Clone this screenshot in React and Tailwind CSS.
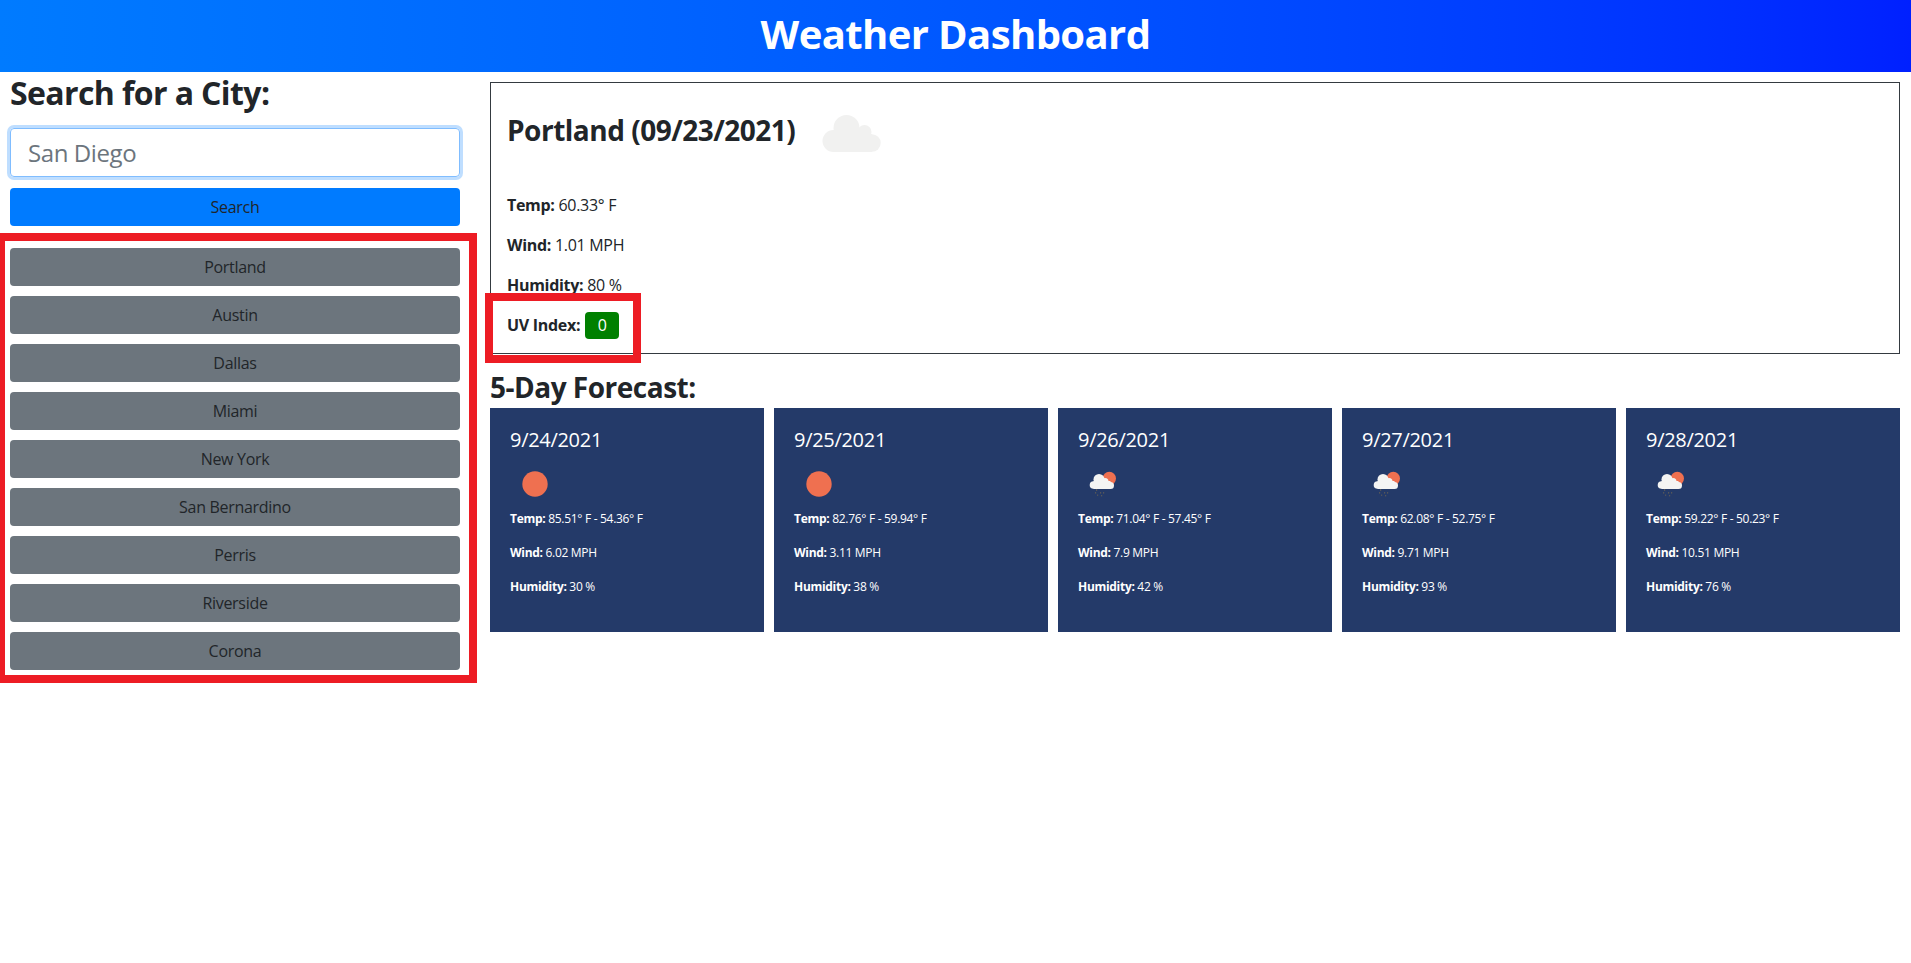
const font = "font-['Open_Sans','Noto_Sans',sans-serif]";

const cities = ["Portland", "Austin", "Dallas", "Miami", "New York", "San Bernardino", "Perris", "Riverside", "Corona"];

const forecast = [
  { date: "9/24/2021", icon: "sun", temp: "85.51° F - 54.36° F", wind: "6.02 MPH", hum: "30 %" },
  { date: "9/25/2021", icon: "sun", temp: "82.76° F - 59.94° F", wind: "3.11 MPH", hum: "38 %" },
  { date: "9/26/2021", icon: "rain", temp: "71.04° F - 57.45° F", wind: "7.9 MPH", hum: "42 %" },
  { date: "9/27/2021", icon: "rain", temp: "62.08° F - 52.75° F", wind: "9.71 MPH", hum: "93 %" },
  { date: "9/28/2021", icon: "rain", temp: "59.22° F - 50.23° F", wind: "10.51 MPH", hum: "76 %" },
];

function Cloud() {
  return (
    <svg width="90" height="70" viewBox="0 0 90 70" className="block shrink-0">
      <g fill="#f1f1f0">
        <circle cx="24.5" cy="41" r="11" />
        <circle cx="63" cy="43" r="8.7" />
        <circle cx="37.5" cy="28" r="13" />
        <circle cx="55.5" cy="32" r="7" />
        <rect x="24" y="34" width="39" height="18" />
      </g>
    </svg>
  );
}

function WeatherIcon({ kind }) {
  if (kind === "sun") {
    return (
      <svg width="50" height="50" viewBox="0 0 50 50" className="block">
        <circle cx="25" cy="25" r="12.7" fill="#ef7050" />
      </svg>
    );
  }
  return (
    <svg width="50" height="50" viewBox="0 0 50 50" className="block">
      <circle cx="31.3" cy="19.5" r="6.7" fill="#ef7050" />
      <g fill="#f4f4f3">
        <circle cx="15.5" cy="26" r="3.8" />
        <circle cx="21" cy="20.5" r="5.5" />
        <circle cx="27" cy="22.5" r="3.5" />
        <circle cx="32.5" cy="26.5" r="3.5" />
        <rect x="15.5" y="22" width="17" height="8" />
      </g>
      <g fill="#55565a">
        <rect x="18" y="30" width="1.2" height="2" />
        <rect x="17" y="33" width="1.2" height="1.6" />
        <rect x="22" y="33" width="1.2" height="1.6" />
        <rect x="25" y="33" width="1.2" height="1.6" />
        <rect x="19" y="35.5" width="1.2" height="1.4" />
        <rect x="23" y="36" width="1.2" height="1.4" />
      </g>
    </svg>
  );
}

function ForecastCard({ d }) {
  return (
    <div className="w-[274px] h-[224px] bg-[#243a69] text-white px-5 pt-5">
      <h5 className="text-[20px] leading-[24px] font-medium m-0 tracking-[-0.3px]">{d.date}</h5>
      <div className="mt-[7px] h-[50px]"><WeatherIcon kind={d.icon} /></div>
      <p className="text-[12px] leading-[18px] mt-[1px] mb-4 tracking-[-0.3px]"><strong>Temp:</strong> {d.temp}</p>
      <p className="text-[12px] leading-[18px] mb-4 tracking-[-0.3px]"><strong>Wind:</strong> {d.wind}</p>
      <p className="text-[12px] leading-[18px] mb-4 tracking-[-0.3px]"><strong>Humidity:</strong> {d.hum}</p>
    </div>
  );
}

export default function App() {
  return (
    <div className={`relative min-h-[963px] bg-white text-[#212529] overflow-hidden ${font}`}>
      <header className="h-[72px] bg-linear-to-r from-[#007bff] to-[#0020ff] flex items-center justify-center">
        <h1 className="text-[40px] leading-[48px] font-bold text-white tracking-[-0.6px] m-0 -mt-[4px]">Weather Dashboard</h1>
      </header>

      <main className="flex pl-[10px] gap-[30px]">
        <aside className="w-[450px] shrink-0 flex flex-col">
          <h2 className="text-[32px] leading-[38px] font-bold mt-[2px] tracking-[-0.6px]">Search for a City:</h2>
          <input
            placeholder="San Diego"
            className="mt-[16px] h-[49px] w-full rounded-[4px] border border-[#80bdff] ring-3 ring-[#007bff]/25 outline-none px-[17px] text-[24px] placeholder:text-[#6c757d] tracking-[-0.4px]"
          />
          <button className="mt-[11px] h-[38px] rounded-[4px] bg-[#007bff] text-[16px] text-[#212529] tracking-[-0.3px]">Search</button>
          <div className="mt-[22px] flex flex-col gap-[10px]">
            {cities.map((c) => (
              <button key={c} className="h-[38px] rounded-[4px] bg-[#6c757d] text-[16px] text-[#212529] tracking-[-0.3px]">{c}</button>
            ))}
          </div>
        </aside>

        <section className="w-[1410px] shrink-0 pt-[10px]">
          <div className="h-[272px] border border-[#343a40] px-4">
            <div className="h-[94px] mb-4 flex items-start">
              <h3 className="w-[303px] shrink-0 text-[28px] leading-[34px] font-bold mt-[30px] tracking-[-0.5px]">Portland (09/23/2021)</h3>
              <div className="mt-[17px] -ml-px"><Cloud /></div>
            </div>
            <p className="text-[16px] leading-[24px] mb-4 tracking-[-0.3px]"><strong>Temp:</strong> 60.33° F</p>
            <p className="text-[16px] leading-[24px] mb-4 tracking-[-0.3px]"><strong>Wind:</strong> 1.01 MPH</p>
            <p className="text-[16px] leading-[24px] mb-4 tracking-[-0.3px]"><strong>Humidity:</strong> 80 %</p>
            <div className="h-6 flex items-center gap-[5px] text-[16px] tracking-[-0.3px]">
              <strong>UV Index:</strong>
              <span className="w-[34px] h-[27px] shrink-0 rounded-[4px] bg-[#008000] text-white flex items-center justify-center">0</span>
            </div>
          </div>

          <h3 className="text-[28px] leading-[34px] font-bold mt-[16px] mb-[4px] tracking-[-0.5px]">5-Day Forecast:</h3>
          <div className="flex gap-[10px]">
            {forecast.map((d) => <ForecastCard key={d.date} d={d} />)}
          </div>
        </section>
      </main>

      {/* Red annotation frames drawn over the page */}
      <div className="absolute left-[-3px] top-[233px] w-[480px] h-[450px] border-[8px] border-[#ed1c24] pointer-events-none" />
      <div className="absolute left-[485px] top-[293px] w-[156px] h-[70px] border-[8px] border-[#ed1c24] bg-transparent pointer-events-none" />
    </div>
  );
}
